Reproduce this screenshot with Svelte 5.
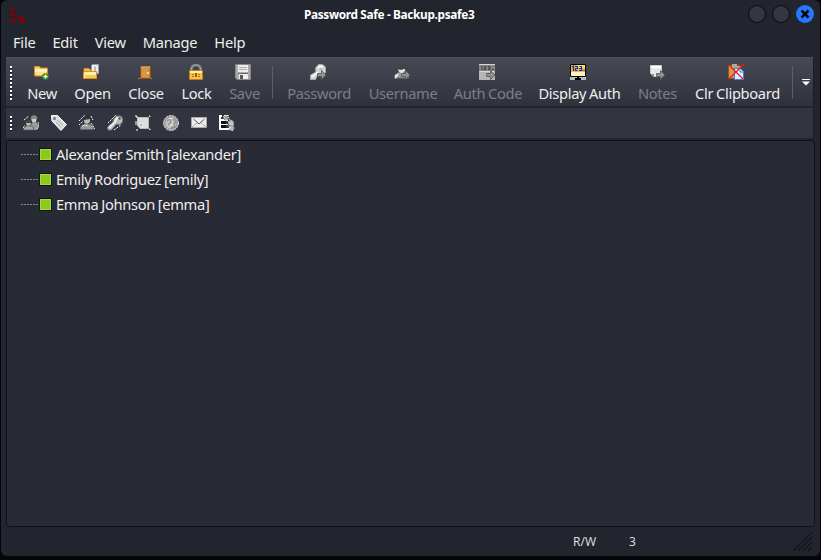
<script>
  const menus = ['File', 'Edit', 'View', 'Manage', 'Help'];
  const actions = [
    { label: 'New', icon: 'new', width: 30, inset: 7 },
    { label: 'Open', icon: 'open', width: 35, inset: 8 },
    { label: 'Close', icon: 'door', width: 36, inset: 9 },
    { label: 'Lock', icon: 'lock', width: 29, inset: 6 },
    { label: 'Save', icon: 'save', width: 31, inset: 6, off: true },
    { sep: true },
    { label: 'Password', icon: 'keycopy', width: 64, inset: 23, off: true },
    { label: 'Username', icon: 'usercopy', width: 68, inset: 25, off: true },
    { label: 'Auth Code', icon: 'authcopy', width: 66, inset: 24, off: true },
    { label: 'Display Auth', icon: 'monitor', width: 81, inset: 31 },
    { label: 'Notes', icon: 'notecopy', width: 39, inset: 11, off: true },
    { label: 'Clr Clipboard', icon: 'clear', width: 85, inset: 33 }
  ];
  const drag = ['users', 'tag', 'user', 'key', 'note', 'globe', 'mail', 'auth'];
  const entries = ['Alexander Smith [alexander]', 'Emily Rodriguez [emily]', 'Emma Johnson [emma]'];
</script>

{#snippet arrow()}
  <path d="M7.5 9.500h4v-3l4.500 4.500-4.500 4.500v-3h-4z" fill="#929292" stroke="#555" stroke-width=".8" />
{/snippet}

{#snippet icon(name, inset = 0)}
  <svg class="icon" style:margin-left="{inset}px" width="16" height="16" viewBox="0 0 16 16">
    {#if name === 'new'}
      <path d="M.5 2.500h5l1 1.500h7v8H.5z" fill="#f8d45c" stroke="#d98b20" />
      <path d="M1 5h12v3H1z" fill="#fff2bd" /><path d="M2 8h10v3H2z" fill="#fae38b" />
      <circle cx="11.5" cy="12.5" r="3.3" fill="#368b20" /><path d="M9.5 12.5h4m-2-2v4" stroke="#fff" stroke-width="1.3" />
    {:else if name === 'open'}
      <path d="M1 4.500h5l2 2h5.500v8H1z" fill="#f4bd45" stroke="#e09120" />
      <path d="M8.500 1.500l1-1h6v9h-7z" fill="#eee" stroke="#9a9fa5" /><path d="M10.500 2h3v6h-3z" fill="#bbb" stroke="#eee" />
      <path d="M.5 9l1-1.500h12v7H.5z" fill="#fff0ae" stroke="#e28a20" /><path d="M2 11h11v3H2z" fill="#f6c952" />
    {:else if name === 'door'}
      <path d="M1 14.500h14" stroke="#888" /><path d="M3.500 2.500h10v12h-10z" fill="#c78740" stroke="#954b14" />
      <path d="M4 3h9" stroke="#edbb72" /><path d="M5 4h6v9H5z" fill="#d4954c" /><path d="M10 8h2v2h-2z" fill="#ffe06b" />
    {:else if name === 'lock'}
      <path d="M3.500 7V5a4.500 4 0 0 1 9 0v2" fill="none" stroke="#777" stroke-width="3" /><path d="M3.500 7V5a4.500 4 0 0 1 9 0v2" fill="none" stroke="#aaa" />
      <path d="M1.500 6.500h13v9h-13z" fill="#f3c44e" stroke="#c87c14" /><path d="M2 7h12v2H2z" fill="#ffedaa" />
      <path d="M4 10.500h2m4 0h2m-8 2h2m4 0h2" stroke="#b8720e" /><path d="M7 9h2v4H7z" fill="#9e5911" />
    {:else if name === 'save'}
      <path d="M.5.5h15v15H2l-1.500-1.500z" fill="#aaa" stroke="#888" /><path d="M3 1h10v7H3z" fill="#eee" />
      <path d="M4 3.500h8m-8 2h8" stroke="#aaa" /><path d="M4 10h9v5H4z" fill="#eee" /><path d="M5 11h3v4H5z" fill="#555" /><path d="M3 9.500h10" stroke="#666" />
    {:else if name === 'keycopy'}
      <path d="M5.500 4l3-3.500h4L15.500 3v5.500L13 10.500 8 10l-2.500 5.500h-5v-4.500L6 8z" fill="#d6d6d6" stroke="#aaa" />
      <path d="M2 13l6-5M8 4l2-2 3 1" fill="none" stroke="#fff" stroke-width="1.500" /><path d="M9 6l4-1" stroke="#aaa" />{@render arrow()}
    {:else if name === 'usercopy'}
      <path d="M.5 14v-2.500l4-3h6l4 3V14z" fill="#999" stroke="#777" /><path d="M4 3l2-2h4l2 2v4H4z" fill="#444" />
      <path d="M4 5l2 1 5-1v2L8 9.500 5 8zM1 11l4-2-1 3-3 3z" fill="#e5e5e5" />{@render arrow()}
    {:else if name === 'authcopy'}
      <path d="M0 0h16v16H0z" fill="#b5b5b5" /><path d="M0 1h16v6H0z" fill="#858585" /><path d="M1 7.500h14M0 .5h16" stroke="#d6d6d6" />
      <path d="M2 3l1-1v4M5 2.500h2v1.500H5v1.500h2m2-3h2v3H9m0-1.500h2m2 1.500h2" fill="none" stroke="#444" />{@render arrow()}
    {:else if name === 'monitor'}
      <path d="M0 0h16v16H0z" fill="#bbb" /><path d="M.5.5h15v12H.5z" fill="#fff3c4" stroke="#000" />
      <path d="M1 1h14v7H1z" fill="#ffb71c" /><path d="M7 1h8v3H7z" fill="#ffe36c" />
      <path d="M2 3l1.500-1v5M5 2.500h2.500v2H5.500v2h2m2-4h2v4H9m0-2h2m1.500 2h1m1 0h.5" fill="none" stroke="#092bee" stroke-width="1.200" /><path d="M7 13h2v1h2v2H5v-2h2z" fill="#000" />
    {:else if name === 'notecopy'}
      <path d="M1.500 1.500h11v11h-8l-3-3z" fill="#e9e9e9" stroke="#ccc" /><path d="M2 2h10v2H2z" fill="#fff" /><path d="M2 10h3v3z" fill="#888" />{@render arrow()}
    {:else if name === 'clear'}
      <path d="M.5 1.500h12v13H.5z" fill="#d59945" stroke="#985014" /><path d="M4 0h5v3H4z" fill="#aaa" />
      <path d="M6.500 4.500h6l3 3v8h-9z" fill="#e2efff" stroke="#4280d5" /><path d="M12 5v3h3" fill="none" stroke="#4280d5" />
      <path d="M1 1l14 14M16 0L1 15" stroke="#f01826" stroke-width="1.300" />
    {:else if name === 'users'}
      <circle cx="11" cy="3.500" r="3.200" fill="#888" /><path d="M9 4h4v3H9z" fill="#ccc" /><path d="M8 9l2-2h3l3 3-2 5H8z" fill="#999" />
      <circle cx="5.500" cy="7.500" r="3.200" fill="#444" /><path d="M3 8h5l-1 3H4z" fill="#bbb" />
      <path d="M.5 15v-2l3-2h5l2 2v2z" fill="#aaa" stroke="#555" stroke-width=".7" />
      <path d="M1 5l5-4m-6 12l2-3m12 4q3-3 1-7" fill="none" stroke="#fff" stroke-dasharray="2 1" />
    {:else if name === 'tag'}
      <path d="M.5.5h6l9 9-5.500 6L1 6z" fill="#ddd" stroke="#fff" /><circle cx="3.500" cy="3.500" r="1.500" fill="#777" /><path d="M6 5l6 5m-7-3l5 5" stroke="#aaa" />
    {:else if name === 'user'}
      <path d="M1.500 14.500v-3l4-2.500h5l4 2.500v3z" fill="#999" stroke="#666" /><path d="M4 3l2-2h4l2 2v5H4z" fill="#333" /><path d="M5 5l6-1v3L8 9 5.500 8z" fill="#bbb" />
      <path d="M0 6l6-6M0 10l4-4m8 2l4 6M12 1l2 4" stroke="#fff" stroke-dasharray="2 1" /><path d="M3 11l3-1 3 1" stroke="#ddd" fill="none" />
    {:else if name === 'key'}
      <path d="M6.500 4l3-3h4l2 2v4l-3 3-3-1-5 6H1l-.5-3L6 7z" fill="#bbb" stroke="#777" />
      <path d="M2 13l6-6 2-4 3 1" fill="none" stroke="#eee" stroke-width="2" /><circle cx="12.500" cy="3.500" r="1.300" fill="#555" /><path d="M1 8l8-8m-2 15l7-5" stroke="#fff" stroke-dasharray="2 1" />
    {:else if name === 'note'}
      <path d="M2.500 2.500h11v11H5l-2.500-3z" fill="#ddd" stroke="#bbb" /><path d="M3 8.500h4.500V13z" fill="#aaa" stroke="#eee" />
      <path d="M0 1h2v2m12-2h1v1M1 15h2m11-1h1v1M1 6v4" fill="none" stroke="#fff" />
    {:else if name === 'globe'}
      <circle cx="8" cy="8" r="7.500" fill="#aaa" stroke="#ddd" stroke-dasharray="2 1" /><circle cx="8" cy="8" r="6" fill="#c5c5c5" stroke="#999" />
      <path d="M4 6l3-2 1 3-3 3M10 4l3 3-2 2 1 3-4 1" fill="none" stroke="#888" stroke-width="1.300" /><path d="M6 4l3-1M7 10l3-1" stroke="#eee" />
    {:else if name === 'mail'}
      <path d="M.5 2.500h15v10H.5z" fill="#eee" stroke="#aaa" /><path d="M1 12l5-4m9 4l-5-4" stroke="#aaa" /><path d="M2.500 4L8 9l5.500-5" fill="none" stroke="#555" />
    {:else}
      <path d="M0 0h3v2H2v12H0zm5 0h4v1H5zM1 4h8v2H1zm1 5h6v1H2zm0 4h9v2H0v-1h2z" fill="#fff" /><path d="M2 6h5v3H2zm0 4h5v3H2z" fill="#111" />
      <circle cx="7" cy="3" r="2.500" fill="#999" /><circle cx="12" cy="8" r="2.800" fill="#bbb" /><circle cx="12.500" cy="13" r="2.800" fill="#aaa" />
      <path d="M4 1l8 8M9 0l1 4 3 2m-5 3l6 7m-4-2l5-5" fill="none" stroke="#fff" stroke-dasharray="1 1" />
    {/if}
  </svg>
{/snippet}

<div class="window">
  <header>
    <svg class="logo" width="17" height="17" viewBox="0 0 17 17"><path d="M0 0l5 5.500H0zM0 5.500l5 5H0zM0 16v-5.500L5.500 16zM5 10.500h5l6.500 5.500h-6z" fill="#850006" /><path d="M0 5.500h5M0 10.500h6" stroke="#4b0710" stroke-width=".7" /></svg>
    <h1>Password Safe - Backup.psafe3</h1>
    <div class="controls"><i></i><i></i><i class="close"><svg width="18" height="18" viewBox="0 0 18 18"><path d="M5.500 5.500l7 7m0-7l-7 7" stroke="#07090f" stroke-width="2.500" /></svg></i></div>
  </header>
  <nav>{#each menus as m}<span>{m}</span>{/each}</nav>
  <div class="toolbar">
    <b class="grip"></b>
    {#each actions as a}
      {#if a.sep}<b class="sep"></b>
      {:else}<div class="action" class:off={a.off} style:width="{a.width}px">{@render icon(a.icon, a.inset)}<span>{a.label}</span></div>{/if}
    {/each}
    <b class="sep last"></b>
    <svg class="more" width="8" height="7" viewBox="0 0 8 7"><path d="M0 0h8v1H0zM0 2.500h8L4 6.500z" fill="#fff" /></svg>
  </div>
  <div class="dragbar"><b class="grip"></b>{#each drag as d}{@render icon(d)}{/each}</div>
  <main>
    {#each entries as e}<div class="entry"><b class="line"></b><b class="box"></b><span>{e}</span></div>{/each}
  </main>
  <footer>
    <span class="mode">R/W</span><span>3</span>
    <svg class="resize" width="20" height="20" viewBox="0 0 20 20"><path d="M0 19L19 0M5 19L19 5M10 19l9-9M15 19l4-4" stroke="#11131b" stroke-width="1.100" /></svg>
  </footer>
</div>

<style>
  :global(body) { background: #050609; overflow: hidden; }
  .window { box-sizing: border-box; width: 819px; height: 556px; margin-left: 1px; padding: 0 5px; background: #23252e; border-radius: 6px; display: flex; flex-direction: column; font: 14.67px/20px "Noto Sans", sans-serif; letter-spacing: -.32px; word-spacing: -.7px; color: #eeeeec; white-space: nowrap; }
  header { height: 30px; display: flex; align-items: flex-start; }
  .logo { margin: 6px 0 0 5px; }
  h1 { margin: 4px 0 0 276px; width: 400px; font-size: 11.8px; line-height: 20px; font-weight: 700; color: #fff; letter-spacing: -.33px; word-spacing: 0; }
  .controls { display: flex; gap: 6px; margin: 5px 1px 0 auto; }
  .controls i { box-sizing: border-box; width: 18px; height: 18px; border-radius: 50%; border: 1px solid #07080c; background: #343742; }
  .controls .close { border: 0; background: #2777ff; }
  .controls svg { display: block; }
  nav { height: 27px; display: flex; padding: 2px 0 0 7px; gap: 17px; box-sizing: border-box; letter-spacing: -.25px; }
  .toolbar { box-sizing: border-box; height: 49px; width: 808px; display: flex; gap: 18px; padding-left: 4px; background: linear-gradient(#464954, #2f323d); border-top: 1px solid #4c4e58; border-right: 1px solid #1b1d25; }
  .grip { width: 2px; margin: 8px -3px 0 0; height: 35px; background: repeating-linear-gradient(#fff 0 2px, #151720 2px 3px, transparent 3px 4px); flex: none; }
  .action { display: flex; flex-direction: column; align-items: center; padding-top: 6px; flex: none; }
  .action .icon { align-self: flex-start; }
  .action span { line-height: 20px; margin-top: 3px; }
  .off span { color: #7d7f84; }
  .icon { display: block; flex: none; }
  .sep { width: 1px; height: 33px; background: #5d606a; margin: 8px -4px 0 -6px; flex: none; }
  .sep.last { margin: 8px -9px 0 -6px; }
  .more { margin-top: 21px; flex: none; }
  .dragbar { box-sizing: border-box; margin-top: 2px; height: 30px; width: 808px; display: flex; gap: 12px; align-items: center; padding-left: 4px; background: #323540; border-right: 1px solid #1b1d25; }
  .dragbar .grip { height: 15px; margin: 0 -1px 0 0; }
  main { box-sizing: border-box; width: 809px; height: 387px; margin-top: 2px; border: 1px solid #0e1016; border-radius: 4px; background: #282a35; padding-top: 1px; }
  .entry { height: 25px; display: flex; align-items: center; padding-left: 14px; }
  .line { width: 18px; height: 1px; background: repeating-linear-gradient(90deg, #888a90 0 2px, transparent 2px 3px); }
  .box { box-sizing: border-box; width: 13px; height: 13px; background: #8bc91b; border: 1px solid #111709; box-shadow: inset 0 0 0 1px #a5d84b; }
  .entry span { margin: 0 0 2px 4px; }
  footer { height: 29px; display: flex; align-items: center; font-size: 12px; letter-spacing: 0; padding-left: 567px; color: #d8d9dc; }
  .mode { width: 56px; }
  .resize { margin: 0 2px 0 auto; }
</style>
